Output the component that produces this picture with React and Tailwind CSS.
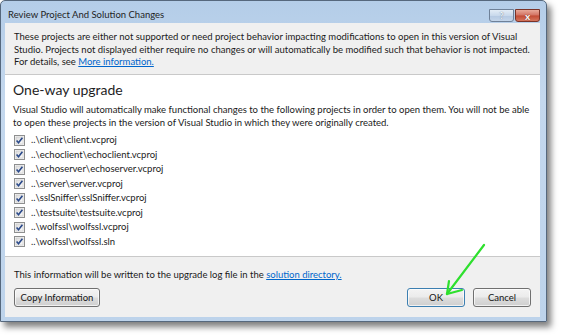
const items = [
  "..\\client\\client.vcproj",
  "..\\echoclient\\echoclient.vcproj",
  "..\\echoserver\\echoserver.vcproj",
  "..\\server\\server.vcproj",
  "..\\sslSniffer\\sslSniffer.vcproj",
  "..\\testsuite\\testsuite.vcproj",
  "..\\wolfssl\\wolfssl.vcproj",
  "..\\wolfssl\\wolfssl.sln",
];

function Check() {
  return (
    <svg width="11" height="11" viewBox="0 0 11 11" className="shrink-0">
      <defs>
        <linearGradient id="cbg" x1="0" y1="0" x2="1" y2="1">
          <stop offset="0" stopColor="#dcdcdc" />
          <stop offset="1" stopColor="#fbfbfb" />
        </linearGradient>
      </defs>
      <rect x="0.5" y="0.5" width="10" height="10" fill="#f4f4f4" stroke="#8e8f8f" />
      <rect x="2" y="2" width="7" height="7" fill="url(#cbg)" stroke="#c6c6c6" strokeWidth="0.6" />
      <path d="M2.6 5.6 L4.5 7.8 L8.4 2.8" fill="none" stroke="#2b4a8a" strokeWidth="1.6" />
    </svg>
  );
}

const btn =
  "h-[19px] rounded-[3px] border text-[9.5px] leading-none text-[#151515] flex items-center justify-center bg-[linear-gradient(#f3f3f3,#ebebeb_48%,#dddddd_52%,#cfcfcf)] shadow-[inset_0_0_0_1px_rgba(255,255,255,0.7)]";

export default function App() {
  return (
    <div className="relative w-[561px] h-[336px] bg-white overflow-hidden font-['Lato',sans-serif] text-[#1a1a1a]">
      <div className="w-[547px] h-[322px] flex flex-col border border-[#56687d] rounded-t-[5px] bg-[linear-gradient(#b4cde8,#c4d8ee_30%,#bdd3eb)] shadow-[4px_5px_6px_rgba(0,0,0,0.5)]">
        {/* title bar */}
        <div className="h-[22px] flex items-start justify-between pl-[7px] pr-[6px] pt-[8px]">
          <div className="text-[9.5px] leading-[12px] text-[#1e1e1e] whitespace-nowrap">
            Review Project And Solution Changes
          </div>
          <div className="flex gap-[1px]">
            <div className="w-[25px] h-[13px] rounded-b-[3px] border border-[#6f8198] bg-[linear-gradient(#e3ecf6,#c9d9ec_50%,#b5c9e2_52%,#c4d6ea)] flex items-center justify-center text-[9px] font-bold leading-none text-[#eef3f9] [text-shadow:0_0_1px_#4a5d75]">
              ?
            </div>
            <div className="w-[25px] h-[13px] rounded-b-[3px] border border-[#7a3328] bg-[linear-gradient(#e8a898,#d27262_48%,#c24a33_52%,#d5765e)] flex items-center justify-center text-[10px] font-bold leading-none text-white [text-shadow:0_0_1px_#5a1a10]">
              x
            </div>
          </div>
        </div>

        {/* client area */}
        <div className="flex-1 flex flex-col ml-[4px] mr-[6px] mb-[4px] bg-[#f0f0f0]">
          {/* header */}
          <div className="h-[52px] border-b border-[#c9c9c9] pl-[9px] pt-[8px] text-[9.5px] leading-[12.5px] whitespace-nowrap">
            <div>These projects are either not supported or need project behavior impacting modifications to open in this version of Visual</div>
            <div>Studio. Projects not displayed either require no changes or will automatically be modified such that behavior is not impacted.</div>
            <div>
              For details, see <span className="text-[#0066cc] underline">More information.</span>
            </div>
          </div>

          {/* body */}
          <div className="flex-1 bg-white border-b border-[#c9c9c9] pl-[8px] pt-[5px]">
            <div className="text-[14px] leading-[20px] text-[#1e1e1e]">One-way upgrade</div>
            <div className="mt-[4px] text-[9.5px] leading-[12.5px] whitespace-nowrap">
              <div>Visual Studio will automatically make functional changes to the following projects in order to open them. You will not be able</div>
              <div>to open these projects in the version of Visual Studio in which they were originally created.</div>
            </div>
            <div className="mt-[4px] flex flex-col">
              {items.map((t) => (
                <div key={t} className="h-[14.5px] flex items-center gap-[6px] pl-[1px] text-[9.5px] whitespace-nowrap">
                  <Check />
                  <span>{t}</span>
                </div>
              ))}
            </div>
          </div>

          {/* footer */}
          <div className="h-[60px] pl-[9px] pr-[9px] pt-[12px] flex flex-col">
            <div className="text-[9.5px] leading-[12px] whitespace-nowrap">
              This information will be written to the upgrade log file in the{" "}
              <span className="text-[#0066cc] underline">solution directory.</span>
            </div>
            <div className="mt-[7px] flex items-center justify-between">
              <div className={btn + " w-[86px] border-[#707070]"}>Copy Information</div>
              <div className="flex gap-[8px]">
                <div className={btn + " w-[58px] border-[#3c7fb1]"}>OK</div>
                <div className={btn + " w-[58px] border-[#707070]"}>Cancel</div>
              </div>
            </div>
          </div>
        </div>
      </div>

      {/* green arrow annotation */}
      <svg className="absolute left-0 top-0 pointer-events-none" width="561" height="336">
        <g stroke="#2ee02e" strokeWidth="2.2" strokeLinecap="round" fill="none">
          <path d="M484 245 L447 294" />
          <path d="M447 294 L449 281" />
          <path d="M447 294 L462 290" />
        </g>
      </svg>
    </div>
  );
}
